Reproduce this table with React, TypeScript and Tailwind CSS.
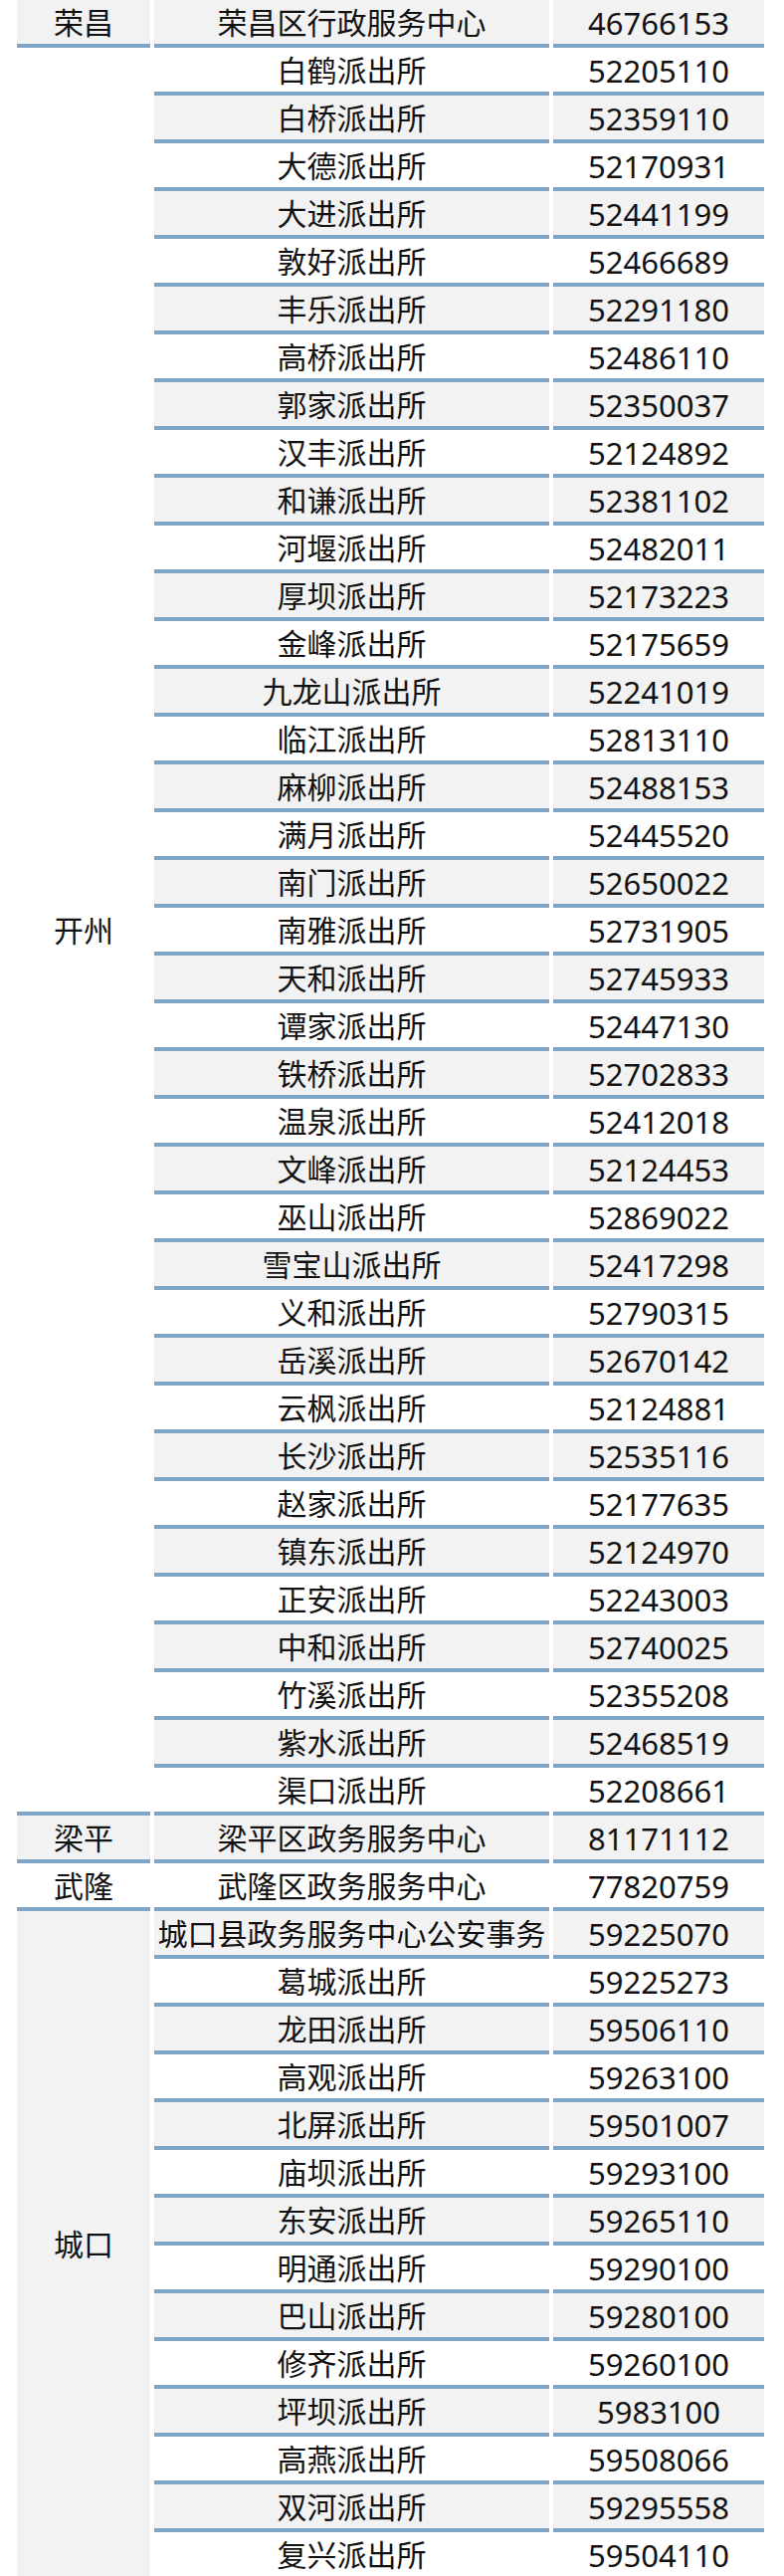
const groups: { region: string; items: [string, string][] }[] = [
  { region: "荣昌", items: [["荣昌区行政服务中心", "46766153"]] },
  {
    region: "开州",
    items: [
      ["白鹤派出所", "52205110"],
      ["白桥派出所", "52359110"],
      ["大德派出所", "52170931"],
      ["大进派出所", "52441199"],
      ["敦好派出所", "52466689"],
      ["丰乐派出所", "52291180"],
      ["高桥派出所", "52486110"],
      ["郭家派出所", "52350037"],
      ["汉丰派出所", "52124892"],
      ["和谦派出所", "52381102"],
      ["河堰派出所", "52482011"],
      ["厚坝派出所", "52173223"],
      ["金峰派出所", "52175659"],
      ["九龙山派出所", "52241019"],
      ["临江派出所", "52813110"],
      ["麻柳派出所", "52488153"],
      ["满月派出所", "52445520"],
      ["南门派出所", "52650022"],
      ["南雅派出所", "52731905"],
      ["天和派出所", "52745933"],
      ["谭家派出所", "52447130"],
      ["铁桥派出所", "52702833"],
      ["温泉派出所", "52412018"],
      ["文峰派出所", "52124453"],
      ["巫山派出所", "52869022"],
      ["雪宝山派出所", "52417298"],
      ["义和派出所", "52790315"],
      ["岳溪派出所", "52670142"],
      ["云枫派出所", "52124881"],
      ["长沙派出所", "52535116"],
      ["赵家派出所", "52177635"],
      ["镇东派出所", "52124970"],
      ["正安派出所", "52243003"],
      ["中和派出所", "52740025"],
      ["竹溪派出所", "52355208"],
      ["紫水派出所", "52468519"],
      ["渠口派出所", "52208661"],
    ],
  },
  { region: "梁平", items: [["梁平区政务服务中心", "81171112"]] },
  { region: "武隆", items: [["武隆区政务服务中心", "77820759"]] },
  {
    region: "城口",
    items: [
      ["城口县政务服务中心公安事务", "59225070"],
      ["葛城派出所", "59225273"],
      ["龙田派出所", "59506110"],
      ["高观派出所", "59263100"],
      ["北屏派出所", "59501007"],
      ["庙坝派出所", "59293100"],
      ["东安派出所", "59265110"],
      ["明通派出所", "59290100"],
      ["巴山派出所", "59280100"],
      ["修齐派出所", "59260100"],
      ["坪坝派出所", "5983100"],
      ["高燕派出所", "59508066"],
      ["双河派出所", "59295558"],
      ["复兴派出所", "59504110"],
    ],
  },
];

// each row: 44px cell + 4px blue rule
const cell =
  "flex items-center justify-center border-b-4 border-[#7fa6c6] h-[48px] pt-[2px]";

export default function App() {
  let row = 0;
  return (
    <div
      className="w-[788px] bg-white pl-[17px] text-[30px] leading-none text-[#111]"
      style={{ fontFamily: '"Noto Sans", "Noto Sans CJK SC", sans-serif' }}
    >
      {groups.map((g, gi) => {
        const start = row;
        row += g.items.length;
        return (
          <div key={g.region} className="flex">
            <div
              className={`flex w-[134px] shrink-0 items-center justify-center border-b-4 border-[#7fa6c6] pt-[2px] ${
                gi % 2 === 0 ? "bg-[#f2f2f2]" : "bg-white"
              }`}
              style={{ height: g.items.length * 48 }}
            >
              {g.region}
            </div>
            <div className="flex flex-col">
              {g.items.map(([name, phone], i) => {
                const bg = (start + i) % 2 === 0 ? "bg-[#f2f2f2]" : "bg-white";
                return (
                  <div key={name} className="flex">
                    <div className={`${cell} ${bg} ml-[4px] w-[397px] whitespace-nowrap`}>
                      {name}
                    </div>
                    <div className={`${cell} ${bg} ml-[4px] w-[212px] text-[31px]`}>
                      {phone}
                    </div>
                  </div>
                );
              })}
            </div>
          </div>
        );
      })}
    </div>
  );
}
